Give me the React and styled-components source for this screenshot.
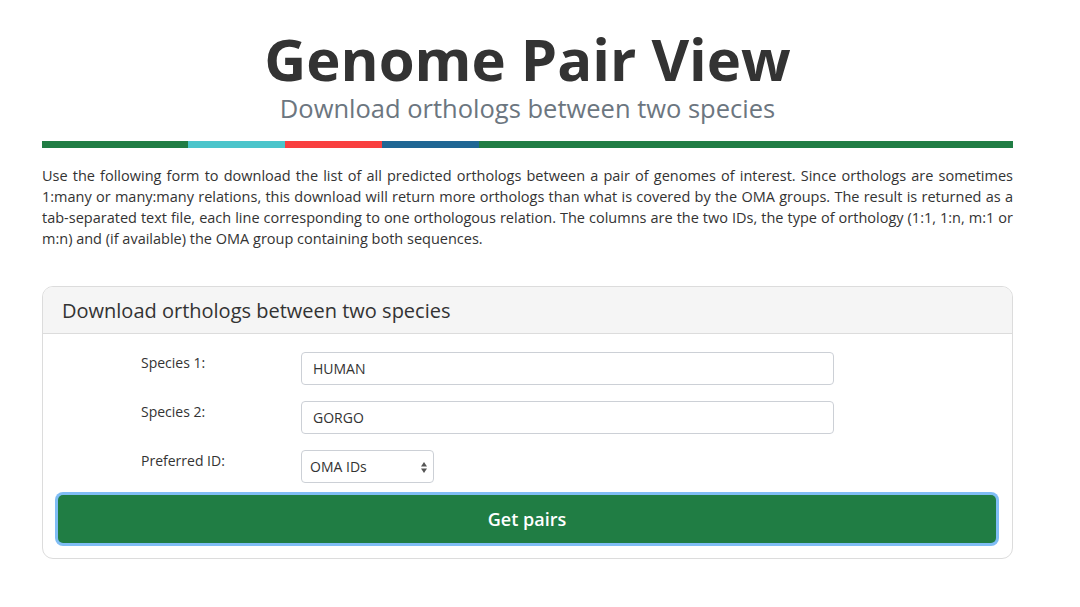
import React from 'react';
import styled, { createGlobalStyle } from 'styled-components';

const GlobalStyle = createGlobalStyle`
  html, body {
    margin: 0;
    padding: 0;
    background: #fff;
    font-family: "Open Sans", "Noto Sans", sans-serif;
    color: #333;
  }
`;

const S = {};

S.Page = styled.div`
  width: 971px;
  margin: 0 0 0 42px;
  padding-top: 27px;
`;

S.Title = styled.h1`
  margin: 0;
  text-align: center;
  font-size: 58px;
  font-weight: 700;
  line-height: 64px;
  color: #333;
`;

S.Subtitle = styled.h2`
  margin: 0;
  text-align: center;
  font-size: 25.5px;
  font-weight: 400;
  line-height: 34px;
  color: #6c7680;
`;

S.ColorBar = styled.div`
  display: flex;
  height: 7px;
  margin-top: 16px;
`;

S.Segment = styled.div`
  width: ${p => p.$w}px;
  flex: ${p => (p.$w ? 'none' : '1')};
  background: ${p => p.$c};
`;

S.Intro = styled.p`
  margin: 17px 0 0;
  font-size: 14.5px;
  line-height: 21px;
  text-align: justify;
  color: #333;
`;

S.Card = styled.div`
  margin-top: 37px;
  border: 1px solid #dcdcdc;
  border-radius: 11px;
  overflow: hidden;
`;

S.CardHeader = styled.div`
  background: #f5f5f5;
  border-bottom: 1px solid #dcdcdc;
  padding: 0 19px;
  height: 46px;
  display: flex;
  align-items: center;
  font-size: 20px;
  color: #333;
`;

S.CardBody = styled.div`
  padding: 18px 16px 15px 15px;
`;

S.Row = styled.div`
  display: grid;
  grid-template-columns: 243px 533px;
  margin-bottom: 16px;
  height: 33px;
`;

S.Label = styled.label`
  padding-left: 83px;
  padding-top: 1px;
  font-size: 14px;
  color: #333;
`;

S.Input = styled.input`
  box-sizing: border-box;
  width: 100%;
  height: 33px;
  border: 1px solid #ccd0d6;
  border-radius: 4px;
  padding: 0 11px;
  font-family: inherit;
  font-size: 14px;
  color: #333;
  outline: none;
`;

S.SelectBox = styled.div`
  position: relative;
  box-sizing: border-box;
  width: 133px;
  height: 33px;
  border: 1px solid #ccd0d6;
  border-radius: 4px;
  display: flex;
  align-items: center;
  padding: 0 8px;
  font-size: 14px;
  color: #333;
`;

S.Arrows = styled.svg`
  position: absolute;
  right: 6px;
  top: 11px;
`;

S.Button = styled.button`
  display: block;
  box-sizing: border-box;
  width: 100%;
  height: 48px;
  margin-top: -4px;
  border: none;
  border-radius: 5px;
  background: #207d44;
  box-shadow: 0 0 0 3px #80bdf5;
  color: #fff;
  font-family: inherit;
  font-size: 18px;
  font-weight: 600;
  cursor: pointer;
`;

const segments = [
  { w: 146, c: '#207d44' },
  { w: 97, c: '#4bc5cb' },
  { w: 97, c: '#f93f3f' },
  { w: 97, c: '#1f6694' },
  { w: 0, c: '#207d44' },
];

export default function App() {
  return (
    <>
      <GlobalStyle />
      <S.Page>
        <S.Title>Genome Pair View</S.Title>
        <S.Subtitle>Download orthologs between two species</S.Subtitle>
        <S.ColorBar>
          {segments.map((s, i) => (
            <S.Segment key={i} $w={s.w} $c={s.c} />
          ))}
        </S.ColorBar>
        <S.Intro>
          Use the following form to download the list of all predicted orthologs between a pair of
          genomes of interest. Since orthologs are sometimes 1:many or many:many relations, this
          download will return more orthologs than what is covered by the OMA groups. The result is
          returned as a tab-separated text file, each line corresponding to one orthologous relation.
          The columns are the two IDs, the type of orthology (1:1, 1:n, m:1 or m:n) and (if
          available) the OMA group containing both sequences.
        </S.Intro>

        <S.Card>
          <S.CardHeader>Download orthologs between two species</S.CardHeader>
          <S.CardBody>
            <S.Row>
              <S.Label>Species 1:</S.Label>
              <S.Input defaultValue="HUMAN" />
            </S.Row>
            <S.Row>
              <S.Label>Species 2:</S.Label>
              <S.Input defaultValue="GORGO" />
            </S.Row>
            <S.Row>
              <S.Label>Preferred ID:</S.Label>
              <S.SelectBox>
                OMA IDs
                <S.Arrows width="6" height="11" viewBox="0 0 6 11">
                  <path d="M3 0 L6 4.5 L0 4.5 Z" fill="#555" />
                  <path d="M3 11 L6 6.5 L0 6.5 Z" fill="#555" />
                </S.Arrows>
              </S.SelectBox>
            </S.Row>
            <S.Button>Get pairs</S.Button>
          </S.CardBody>
        </S.Card>
      </S.Page>
    </>
  );
}
